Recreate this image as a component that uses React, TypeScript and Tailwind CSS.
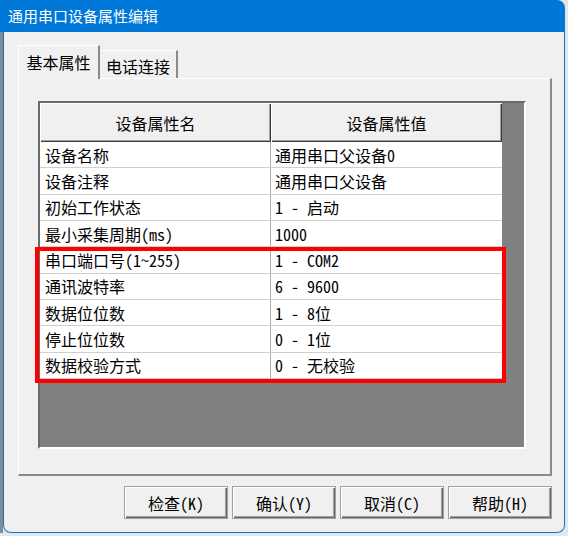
const rows: [string, string][] = [
  ["设备名称", "通用串口父设备0"],
  ["设备注释", "通用串口父设备"],
  ["初始工作状态", "1 - 启动"],
  ["最小采集周期(ms)", "1000"],
  ["串口端口号(1~255)", "1 - COM2"],
  ["通讯波特率", "6 - 9600"],
  ["数据位位数", "1 - 8位"],
  ["停止位位数", "0 - 1位"],
  ["数据校验方式", "0 - 无校验"],
]

const buttons = ["检查(K)", "确认(Y)", "取消(C)", "帮助(H)"]

export default function App() {
  return (
    <div className="w-[568px] h-[536px] bg-[#e6e6e6] overflow-hidden font-['Noto_Sans_Mono_CJK_SC','Noto_Sans_CJK_SC',monospace] text-[16px] text-black">
      {/* title bar */}
      <div className="w-[565px] h-[32px] bg-[#0078d7] rounded-tr-[8px] flex items-center pl-[8px] text-white text-[15px] font-['Noto_Sans_CJK_SC',sans-serif]">
        通用串口设备属性编辑
      </div>

      <div className="flex">
        <div className="w-[3px] h-[501px] bg-[#8a8a8a]" />

        {/* window body */}
        <div className="w-[562px] h-[501px] bg-[#f0f0f0] border-l border-r border-b border-[#0078d7] rounded-b-[8px] pl-[14px] pt-[13px]">
          {/* tabs */}
          <div className="flex items-end h-[33px]">
            <div className="w-[82px] h-[34px] -mb-px relative z-10 bg-[#f0f0f0] border-t border-l border-white border-r-2 border-r-[#8a8a8a] flex items-center justify-center leading-none pb-[2px]">
              基本属性
            </div>
            <div className="w-[78px] h-[28px] border-t border-white border-r-2 border-r-[#8a8a8a] flex items-center justify-center leading-none pt-[2px]">
              电话连接
            </div>
          </div>

          {/* tab panel */}
          <div className="w-[534px] h-[398px] border-t border-l border-white border-r-2 border-b-2 border-r-[#8a8a8a] border-b-[#8a8a8a] pl-[19px] pt-[22px]">
            {/* grid */}
            <div className="w-[488px] h-[348px] bg-[#808080] border-2 border-t-[#696969] border-l-[#696969] border-r-white border-b-white">
              <div className="relative w-[462px]">
                <div className="flex h-[39px] bg-[#f0f0f0]">
                  <div className="w-[231px] flex items-center justify-center shadow-[inset_1px_1px_0_#ffffff,inset_-1px_-1px_0_#3c3c3c,inset_-2px_-2px_0_#a0a0a0]">
                    设备属性名
                  </div>
                  <div className="w-[231px] flex items-center justify-center shadow-[inset_1px_1px_0_#ffffff,inset_-1px_-1px_0_#3c3c3c,inset_-2px_-2px_0_#a0a0a0]">
                    设备属性值
                  </div>
                </div>

                {rows.map(([name, value], i) => (
                  <div key={i} className="flex h-[26.33px] bg-white border-b border-[#cfcfcf] leading-none">
                    <div className="w-[231px] border-r border-[#a9a9a9] flex items-center pl-[5px] whitespace-pre">
                      {name}
                    </div>
                    <div className="w-[231px] flex items-center pl-[4px] whitespace-pre">
                      {value}
                    </div>
                  </div>
                ))}

                {/* highlight */}
                <div className="absolute left-[-5px] top-[144px] w-[471px] h-[136px] border-4 border-[#ff0000]" />
              </div>
            </div>
          </div>

          {/* buttons */}
          <div className="flex justify-end gap-[4px] w-[534px] mt-[10px]">
            {buttons.map((b) => (
              <div
                key={b}
                className="w-[104px] h-[33px] flex items-center justify-center bg-[#f0f0f0] border border-[#a0a0a0] shadow-[inset_1px_1px_0_#ffffff,inset_-1px_-1px_0_#696969,inset_-2px_-2px_0_#a0a0a0] leading-none"
              >
                {b}
              </div>
            ))}
          </div>
        </div>
      </div>
    </div>
  )
}
